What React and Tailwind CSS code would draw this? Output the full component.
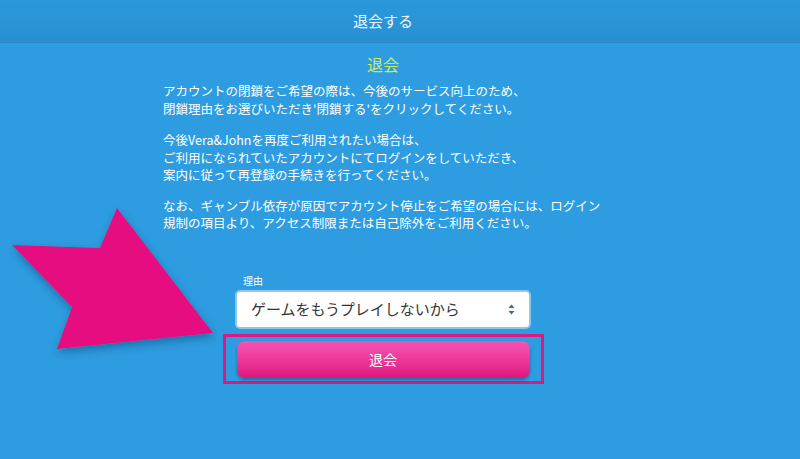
const jp = { fontFamily: '"Noto Sans CJK JP", "Noto Sans", sans-serif' };

function Arrow() {
  return (
    <svg
      className="absolute left-0 top-0 pointer-events-none"
      width="240"
      height="380"
      viewBox="0 0 240 380"
    >
      <defs>
        <filter id="sh" x="-20%" y="-20%" width="140%" height="140%">
          <feDropShadow dx="1" dy="4" stdDeviation="4" floodColor="#0a3d66" floodOpacity="0.45" />
        </filter>
      </defs>
      <polygon
        points="117,208 213,333 57,349 72,307 12,245 100,248"
        fill="#e5107f"
        filter="url(#sh)"
      />
    </svg>
  );
}

export default function App() {
  return (
    <div className="relative w-[800px] h-[459px] overflow-hidden bg-[#2e9ce0]" style={jp}>
      {/* ================= HEADER ================= */}
      <div className="h-[43px] flex items-center justify-center pr-[34px] bg-gradient-to-b from-[#2b98dc] to-[#2890d2] border-b border-[#2886c4]">
        <span className="text-[15px] text-[#eef6fc]">退会する</span>
      </div>

      {/* ================= CONTENT ================= */}
      <div className="flex flex-col items-center pr-[34px]">
        <h2 className="mt-[10px] text-[16px] leading-[22px] text-[#c9ea68]">退会</h2>

        <div className="w-[440px] mt-[7px] text-[12.5px] leading-[17.5px] text-white">
          <p>
            アカウントの閉鎖をご希望の際は、今後のサービス向上のため、
            <br />
            閉鎖理由をお選びいただき'閉鎖する'をクリックしてください。
          </p>
          <p className="mt-[14px]">
            今後Vera&amp;Johnを再度ご利用されたい場合は、
            <br />
            ご利用になられていたアカウントにてログインをしていただき、
            <br />
            案内に従って再登録の手続きを行ってください。
          </p>
          <p className="mt-[13px]">
            なお、ギャンブル依存が原因でアカウント停止をご希望の場合には、ログイン
            <br />
            規制の項目より、アクセス制限または自己除外をご利用ください。
          </p>
        </div>

        {/* ================= FORM ================= */}
        <div className="w-[296px] mt-[43px]">
          <div className="pl-[8px] text-[10px] leading-[12px] text-white">理由</div>
          <div className="mt-[3px] h-[39px] flex items-center justify-between rounded-[5px] bg-white border-2 border-[#8fc4ec] pl-[14px] pr-[14px]">
            <span className="text-[15px] text-[#333]">ゲームをもうプレイしないから</span>
            <span className="flex flex-col items-center text-[#3a6c94]">
              <svg width="7" height="11" viewBox="0 0 7 11">
                <path d="M3.5 0.5 L6.5 4 L0.5 4 Z" fill="currentColor" />
                <path d="M3.5 10.5 L6.5 7 L0.5 7 Z" fill="currentColor" />
              </svg>
            </span>
          </div>
        </div>

        <div className="mt-[5px] w-[321px] h-[50px] border-[3px] border-[#d81a82] px-[11px] py-[4px]">
          <button className="w-full h-[37px] rounded-[8px] bg-gradient-to-b from-[#f752b6] to-[#e0117f] shadow-[0_2px_3px_rgba(0,0,0,0.3)] text-white text-[14px]">
            退会
          </button>
        </div>
      </div>

      <Arrow />
    </div>
  );
}
